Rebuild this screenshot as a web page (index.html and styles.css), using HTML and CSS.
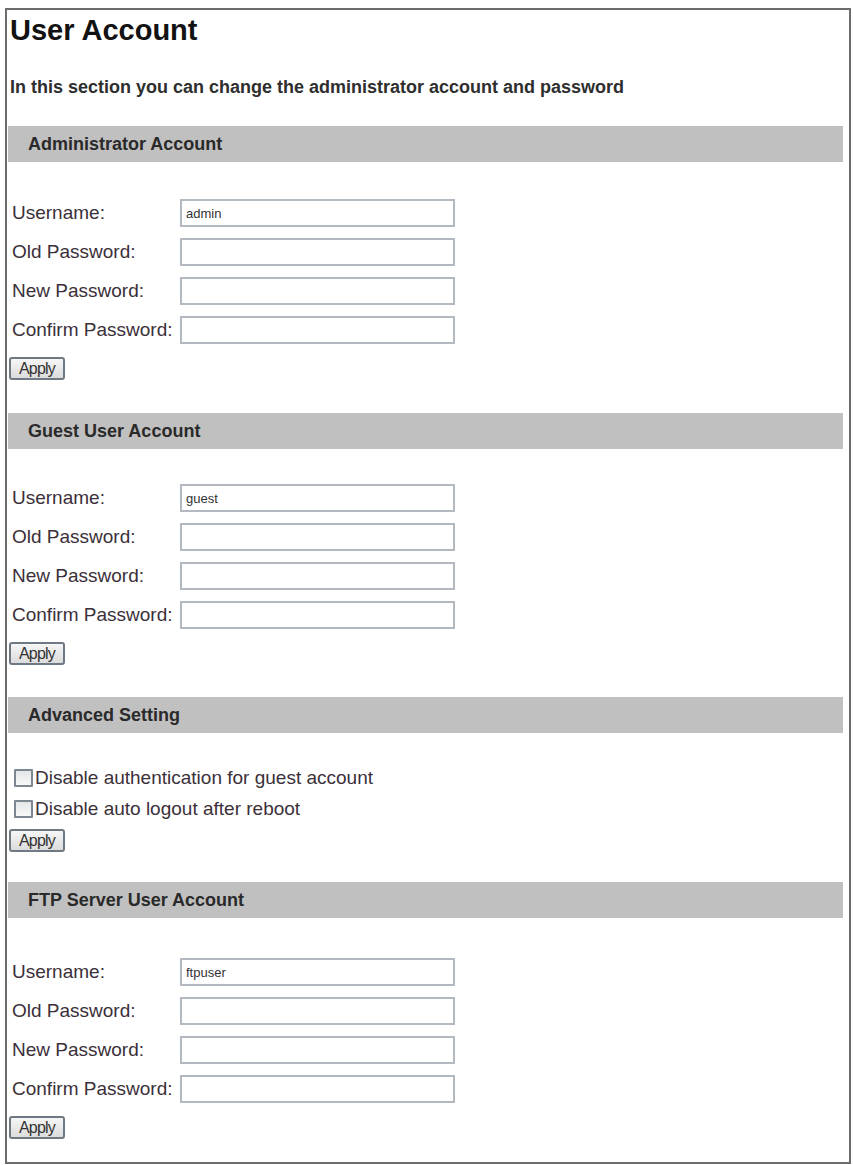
FILE: index.html
```html
<!DOCTYPE html>
<html lang="en">
<head>
<meta charset="utf-8">
<title>User Account</title>
<link rel="stylesheet" href="styles.css">
</head>
<body>
<div class="frame">
  <h1 class="title">User Account</h1>
  <p class="intro">In this section you can change the administrator account and password</p>

  <section class="panel panel-admin">
    <h2 class="panel-head">Administrator Account</h2>
    <div class="panel-body">
      <div class="fields">
        <label class="field-label">Username:</label><input class="field" type="text" value="admin">
        <label class="field-label">Old Password:</label><input class="field" type="password">
        <label class="field-label">New Password:</label><input class="field" type="password">
        <label class="field-label">Confirm Password:</label><input class="field" type="password">
      </div>
      <button class="apply" type="button">Apply</button>
    </div>
  </section>

  <section class="panel panel-guest">
    <h2 class="panel-head">Guest User Account</h2>
    <div class="panel-body">
      <div class="fields">
        <label class="field-label">Username:</label><input class="field" type="text" value="guest">
        <label class="field-label">Old Password:</label><input class="field" type="password">
        <label class="field-label">New Password:</label><input class="field" type="password">
        <label class="field-label">Confirm Password:</label><input class="field" type="password">
      </div>
      <button class="apply" type="button">Apply</button>
    </div>
  </section>

  <section class="panel panel-advanced">
    <h2 class="panel-head">Advanced Setting</h2>
    <div class="panel-body">
      <div class="checks">
        <label class="check"><input class="box" type="checkbox"><span>Disable authentication for guest account</span></label>
        <label class="check"><input class="box" type="checkbox"><span>Disable auto logout after reboot</span></label>
      </div>
      <button class="apply" type="button">Apply</button>
    </div>
  </section>

  <section class="panel panel-ftp">
    <h2 class="panel-head">FTP Server User Account</h2>
    <div class="panel-body">
      <div class="fields">
        <label class="field-label">Username:</label><input class="field" type="text" value="ftpuser">
        <label class="field-label">Old Password:</label><input class="field" type="password">
        <label class="field-label">New Password:</label><input class="field" type="password">
        <label class="field-label">Confirm Password:</label><input class="field" type="password">
      </div>
      <button class="apply" type="button">Apply</button>
    </div>
  </section>
</div>
</body>
</html>
```
FILE: styles.css
```css
html, body {
  margin: 0;
  padding: 0;
  background: #ffffff;
}

body {
  font-family: "Liberation Sans", Arial, sans-serif;
  color: #333;
}

.frame {
  margin: 8px 2px 0 5px;
  border: 2px solid #6c6c6c;
  padding: 0 6px 20px 0;
  box-sizing: border-box;
  min-height: 1156px;
}

.title {
  margin: 4px 0 0 3px;
  font-size: 29px;
  line-height: 33px;
  font-weight: bold;
  color: #121212;
}

.intro {
  margin: 30px 0 0 3px;
  font-size: 18px;
  line-height: 21px;
  font-weight: bold;
  color: #2e2e2e;
}

/* section spacing */
.panel-admin { margin-top: 28px; }
.panel-guest { margin-top: 33px; }
.panel-advanced { margin-top: 32px; }
.panel-ftp { margin-top: 30px; }

.panel-head {
  margin: 0 0 0 1px;
  height: 36px;
  padding-left: 20px;
  display: flex;
  align-items: center;
  background: #c0c0c0;
  font-size: 18px;
  font-weight: bold;
  color: #2a2a2a;
}

.panel-body {
  padding-top: 37px;
  display: flex;
  flex-direction: column;
  align-items: flex-start;
}

.panel-guest .panel-body { padding-top: 35px; }
.panel-ftp .panel-body { padding-top: 40px; }

.fields {
  display: grid;
  grid-template-columns: 169px 275px;
  row-gap: 11px;
  align-items: center;
  margin-left: 4px;
}

.field-label {
  font-size: 19px;
  color: #3b3039;
  white-space: nowrap;
  padding-left: 1px;
}

.field {
  box-sizing: border-box;
  width: 275px;
  height: 28px;
  margin: 0;
  padding: 0 4px;
  border: 2px solid #b3b9c0;
  border-radius: 0;
  background: #fff;
  font-family: "Liberation Sans", Arial, sans-serif;
  font-size: 13px;
  color: #333;
  outline: none;
}

.apply {
  margin: 13px 0 0 2px;
  width: 56px;
  height: 23px;
  padding: 0;
  border: 2px solid #6f7984;
  border-radius: 3px;
  background: linear-gradient(#f6f6f6, #dcdcdc);
  font-family: "Liberation Sans", Arial, sans-serif;
  font-size: 16px;
  line-height: 19px;
  letter-spacing: -0.8px;
  color: #333;
}

.checks {
  display: flex;
  flex-direction: column;
  gap: 9px;
  margin-top: -3px;
  margin-left: 7px;
}

.check {
  display: flex;
  align-items: center;
  gap: 2px;
  height: 22px;
  font-size: 19px;
  color: #3b3039;
}

.box {
  appearance: none;
  -webkit-appearance: none;
  box-sizing: border-box;
  width: 19px;
  height: 18px;
  margin: 0;
  border: 2px solid #7c8791;
  border-radius: 1px;
  background: linear-gradient(#e4e6e8, #f8f8f8);
}

.checks + .apply {
  margin-top: 9px;
}
```
